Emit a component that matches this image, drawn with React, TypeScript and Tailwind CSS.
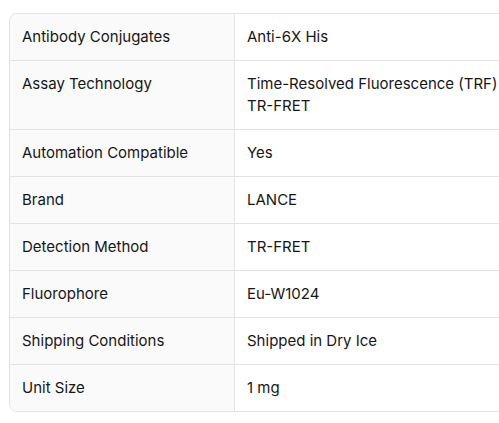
const rows: [string, string[]][] = [
  ["Antibody Conjugates", ["Anti-6X His"]],
  ["Assay Technology", ["Time-Resolved Fluorescence (TRF)", "TR-FRET"]],
  ["Automation Compatible", ["Yes"]],
  ["Brand", ["LANCE"]],
  ["Detection Method", ["TR-FRET"]],
  ["Fluorophore", ["Eu-W1024"]],
  ["Shipping Conditions", ["Shipped in Dry Ice"]],
  ["Unit Size", ["1 mg"]],
];

export default function App() {
  return (
    <div className="w-[499px] h-[423px] overflow-hidden bg-white pt-[13px] pl-[9px] font-['Inter',sans-serif] text-[15px] leading-[22px] text-[#161616]">
      <div className="w-[520px] rounded-lg border border-[#e3e3e3] overflow-hidden">
        {rows.map(([label, values], i) => (
          <div
            key={label}
            className={`flex ${i > 0 ? "border-t border-[#e3e3e3]" : ""}`}
          >
            <div className="w-[225px] shrink-0 bg-[#fafafa] border-r border-[#e3e3e3] px-3 py-3">
              {label}
            </div>
            <div className="flex-1 px-3 py-3">
              {values.map((v) => (
                <div key={v}>{v}</div>
              ))}
            </div>
          </div>
        ))}
      </div>
    </div>
  );
}
